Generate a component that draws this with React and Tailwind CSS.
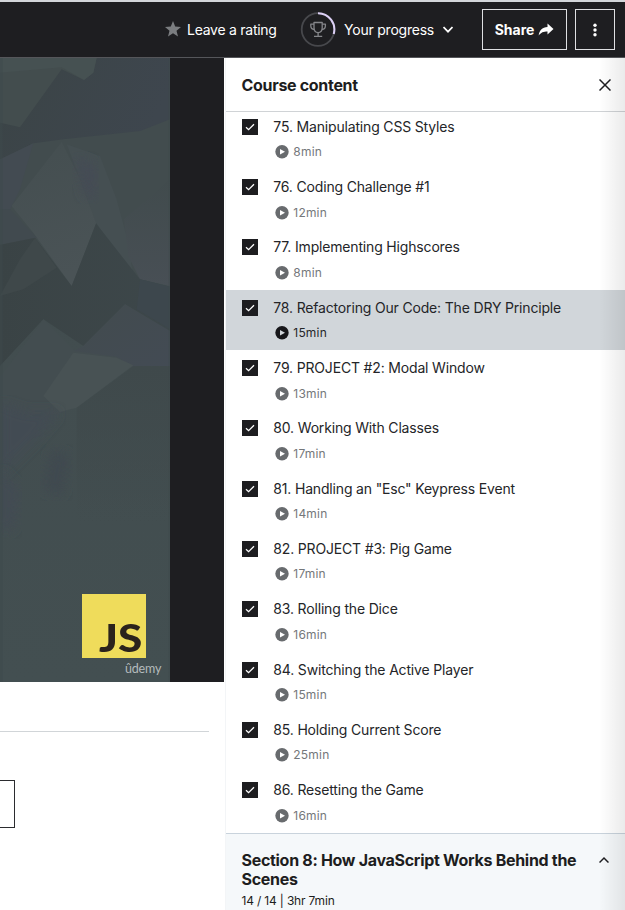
import React from "react";

const lectures = [
  { title: "75. Manipulating CSS Styles", time: "8min" },
  { title: "76. Coding Challenge #1", time: "12min" },
  { title: "77. Implementing Highscores", time: "8min" },
  { title: "78. Refactoring Our Code: The DRY Principle", time: "15min", active: true },
  { title: "79. PROJECT #2: Modal Window", time: "13min" },
  { title: "80. Working With Classes", time: "17min" },
  { title: '81. Handling an "Esc" Keypress Event', time: "14min" },
  { title: "82. PROJECT #3: Pig Game", time: "17min" },
  { title: "83. Rolling the Dice", time: "16min" },
  { title: "84. Switching the Active Player", time: "15min" },
  { title: "85. Holding Current Score", time: "25min" },
  { title: "86. Resetting the Game", time: "16min" },
];

function Header() {
  return (
    <header className="flex h-[58px] shrink-0 items-center border-t-2 border-b border-t-[#d3d6da] border-b-[#55565a] bg-[#1e1e21] pl-[165px] text-sm text-white">
      <svg className="-mt-px h-4 w-4 shrink-0" viewBox="0 0 16 16" fill="#7b7d80">
        <path d="M8 0l2.200 5.500 5.800.4-4.500 3.800L13 15.500 8 12.300l-5 3.200 1.500-5.800L0 5.900l5.800-.4z" />
      </svg>
      <span className="ml-[6px] w-[109px] tracking-[-0.26px] whitespace-nowrap">Leave a rating</span>
      <svg className="ml-[4px] h-9 w-9 shrink-0" viewBox="0 0 36 36" fill="none">
        <circle cx="18" cy="17.500" r="16.300" stroke="#47484c" strokeWidth="1.800" />
        <path d="M18 1.200A16.300 16.300 0 0 1 33.700 22" stroke="#dcd0f5" strokeWidth="2" />
        <g stroke="#85868a" strokeWidth="1.300" strokeLinejoin="round">
          <path d="M14 10.500h8.200v5.300c0 3-1.600 4.800-4.100 4.800S14 18.800 14 15.800z" />
          <path d="M14 12.200h-3.200v1.500c0 2.300 1.300 3.600 3.500 3.800M22.200 12.200h3.200v1.500c0 2.300-1.300 3.600-3.500 3.800M18.100 20.600v3.400M14 24.300h8.200" />
        </g>
      </svg>
      <span className="ml-[8px] w-[90px] tracking-[-0.22px] whitespace-nowrap">Your progress</span>
      <svg className="ml-[9px] h-[10px] w-[10px] shrink-0" viewBox="0 0 10 10" fill="none" stroke="#fff" strokeWidth="1.700">
        <path d="M.5 2L5 6.700 9.500 2" />
      </svg>
      <button className="ml-[29px] flex h-[41px] w-[85px] shrink-0 items-center justify-center gap-[4px] border border-[#dfe0e3] text-sm font-bold">
        <span>Share</span>
        <svg className="h-4 w-4" viewBox="0 0 16 16" fill="#fff">
          <path d="M9.500 1.600l6 5.500-6 5.400V9.400C5.500 9.400 2.800 10.300.7 13.600 1.100 8.500 4.200 5.200 9.500 4.900z" />
        </svg>
      </button>
      <button className="ml-[8px] flex h-[41px] w-[40px] shrink-0 items-center justify-center border border-[#dfe0e3]">
        <svg className="h-4 w-1" viewBox="0 0 4 16" fill="#fff">
          <circle cx="2" cy="3.300" r="1.700" />
          <circle cx="2" cy="8" r="1.700" />
          <circle cx="2" cy="12.700" r="1.700" />
        </svg>
      </button>
    </header>
  );
}

function Backdrop() {
  return (
    <svg className="block h-[624px] w-[170px]" viewBox="0 6 510 1872" preserveAspectRatio="none">
      <defs>
        <linearGradient id="floor" x1="0" y1="0" x2="0" y2="1">
          <stop offset="0" stopColor="#414b4d" />
          <stop offset="1" stopColor="#434f51" />
        </linearGradient>
        <linearGradient id="shade" x1="0" y1="0" x2="1" y2="0">
          <stop offset="0" stopColor="#3a4345" />
          <stop offset="1" stopColor="#3d474a" />
        </linearGradient>
        <linearGradient id="sky" x1="0" y1="0" x2="1" y2="0.300">
          <stop offset="0" stopColor="#3b4446" />
          <stop offset="1" stopColor="#3e464e" />
        </linearGradient>
        <linearGradient id="peak" x1="0" y1="0" x2="0.200" y2="1">
          <stop offset="0" stopColor="#444e50" />
          <stop offset="1" stopColor="#4a5356" />
        </linearGradient>
        <linearGradient id="hill" x1="0" y1="0" x2="1" y2="1">
          <stop offset="0" stopColor="#424b4e" />
          <stop offset="1" stopColor="#434b54" />
        </linearGradient>
        <linearGradient id="slope" x1="0" y1="0" x2="0" y2="1">
          <stop offset="0" stopColor="#414b4d" />
          <stop offset="1" stopColor="#484f55" />
        </linearGradient>
        <linearGradient id="field" x1="0" y1="0" x2="0" y2="1">
          <stop offset="0" stopColor="#3f494b" />
          <stop offset="1" stopColor="#3f494b" stopOpacity="0" />
        </linearGradient>
        <filter id="soft">
          <feGaussianBlur stdDeviation="16" />
        </filter>
      </defs>
      <rect y="6" width="510" height="1872" fill="url(#floor)" />
      <path d="M0 6H510V250L190 262 0 320z" fill="url(#sky)" />
      <path d="M0 6H290L280 50 252 72 185 40 60 214 0 200z" fill="#434d4e" />
      <path d="M0 6H290L280 50 252 72 185 34 0 50z" fill="#465152" />
      <path d="M0 312L100 262 190 250 420 225 510 190V680L400 670 288 500 215 690 100 545 0 565z" fill="#424c4e" />
      <path d="M0 310L100 262 60 400 30 462 0 460z" fill="#434b52" />
      <path d="M185 258L35 450 100 530 215 690 290 500 240 370z" fill="url(#peak)" />
      <path d="M200 265L300 300 350 430 385 560 400 665 288 500 240 370z" fill="#454f52" />
      <path d="M225 300L290 330 285 430 255 420z" fill="#444b54" filter="url(#soft)" />
      <path d="M372 490L510 370V690L420 670 385 600z" fill="url(#slope)" />
      <path d="M0 460H30L110 545 0 568z" fill="#414a4f" />
      <path d="M0 566L105 545 215 690 288 502 420 670 510 692V830L375 745 250 870 130 790 0 930z" fill="url(#shade)" />
      <path d="M105 545L170 635 70 700 0 720 60 610z" fill="#3f484a" />
      <path d="M420 670L510 692V820L410 760z" fill="#3d474d" />
      <path d="M130 790L40 910 0 960V1075H180L400 930 350 902 220 880z" fill="#434d50" />
      <path d="M375 745L250 870 220 885 350 902 400 935 510 930V825z" fill="url(#hill)" />
      <path d="M220 890L350 905 400 928 230 1055 180 1068 130 1020z" fill="#485254" />
      <path d="M0 1040L80 1068 180 1068 110 1150 0 1260z" fill="#434c53" filter="url(#soft)" />
      <path d="M400 930L510 930V1400H230V1055z" fill="url(#field)" />
      <path d="M155 1180L210 1200 185 1320 130 1300z" fill="#404950" filter="url(#soft)" />
      <path d="M0 1240L60 1300 40 1420 0 1430z" fill="#434b52" filter="url(#soft)" />
      <path d="M0 6H8V1878H0zM506 6H510V1878H506z" fill="#3e4a4c" opacity="0.500" />
    </svg>
  );
}

function Player() {
  return (
    <div className="relative h-[624px] bg-[#1e1e21]">
      <Backdrop />
      <div className="absolute top-[536px] left-[82px] flex h-[64px] w-[64px] items-end justify-end bg-[#efdc5b] pr-[4px] pb-px">
        <span className="origin-right scale-x-[1.190] font-['Lato',sans-serif] text-[37px] leading-[38px] font-black text-[#2b231c]">
          JS
        </span>
      </div>
      <div className="absolute top-[603px] left-[125px] font-['Lato',sans-serif] text-[12.500px] leading-[16px] tracking-[-0.2px] text-[#b4bbbc]">
        ûdemy
      </div>
    </div>
  );
}

function Lecture({ title, time, active }) {
  return (
    <li className={`flex h-[60.330px] pt-[9.600px] pl-[15.500px] ${active ? "bg-[#d1d6da]" : ""}`}>
      <svg className="h-4 w-4 shrink-0" viewBox="0 0 16 16">
        <path d="M0 0h16v16H0z" fill="#1d1d20" />
        <path d="M4 8.200l2.600 2.500L12 5.300" fill="none" stroke="#fff" strokeWidth="1.300" />
      </svg>
      <div className="ml-[15.800px]">
        <div className="text-sm leading-4 tracking-[-0.17px] whitespace-nowrap text-[#242528]">{title}</div>
        <div className={`mt-[9.600px] flex items-center gap-[4.500px] pl-[1.500px] text-[12px] leading-4 tracking-[0.2px] ${active ? "text-[#242528]" : "text-[#74777a]"}`}>
          <svg className="h-[14px] w-[14px]" viewBox="0 0 14 14">
            <circle cx="7" cy="6.800" r="6.700" fill={active ? "#17171a" : "#686b6e"} />
            <path d="M5 4l5 2.800-5 2.800z" fill={active ? "#d1d6da" : "#fff"} />
          </svg>
          <span>{time}</span>
        </div>
      </div>
    </li>
  );
}

export default function App() {
  return (
    <div className="flex h-[910px] w-[625px] flex-col overflow-hidden bg-white font-['Inter',sans-serif]">
      <Header />
      <div className="flex min-h-0 flex-1">
        <main className="w-[225px] shrink-0 pr-px">
          <Player />
          <div className="mt-[49px] w-[209px] border-t border-[#d1d5d8]" />
          <div className="mt-[48px] h-[48px] w-[15px] border border-l-0 border-[#2b2c2f]" />
        </main>
        <aside className="relative flex min-w-0 flex-1 flex-col border-l border-[#f3f5f7]">
          <div className="flex h-[54px] shrink-0 items-center justify-between border-b border-[#d0d3d6] pr-[14px] pl-[15.500px]">
            <h2 className="text-base font-bold tracking-[-0.31px] text-[#1d1d20]">Course content</h2>
            <svg className="h-3 w-3" viewBox="0 0 12 12" fill="none" stroke="#1d1d20" strokeWidth="1.500">
              <path d="M.5.5l11 11M11.500.5l-11 11" />
            </svg>
          </div>
          <ul className="-mt-[3px] shrink-0">
            {lectures.map((l) => (
              <Lecture key={l.title} {...l} />
            ))}
          </ul>
          <section className="flex flex-1 justify-between border-t border-[#c9d3dc] bg-[#f5f8fa] pt-[17px] pr-[16px] pl-[15.500px] text-[#1d1d20]">
            <div>
              <h3 className="w-[345px] text-base leading-[19px] font-bold tracking-[-0.3px]">
                Section 8: How JavaScript Works Behind the Scenes
              </h3>
              <p className="mt-[4px] text-[12px] leading-4 tracking-[-0.17px]">14 / 14 | 3hr 7min</p>
            </div>
            <svg className="mt-[4px] h-[10px] w-[10px] shrink-0" viewBox="0 0 10 10" fill="none" stroke="#1d1d20" strokeWidth="1.500">
              <path d="M.5 7.500L5 3l4.500 4.500" />
            </svg>
          </section>
          <div className="pointer-events-none absolute inset-y-0 right-0 w-[26px] bg-linear-to-r from-transparent to-black/8" />
        </aside>
      </div>
    </div>
  );
}
